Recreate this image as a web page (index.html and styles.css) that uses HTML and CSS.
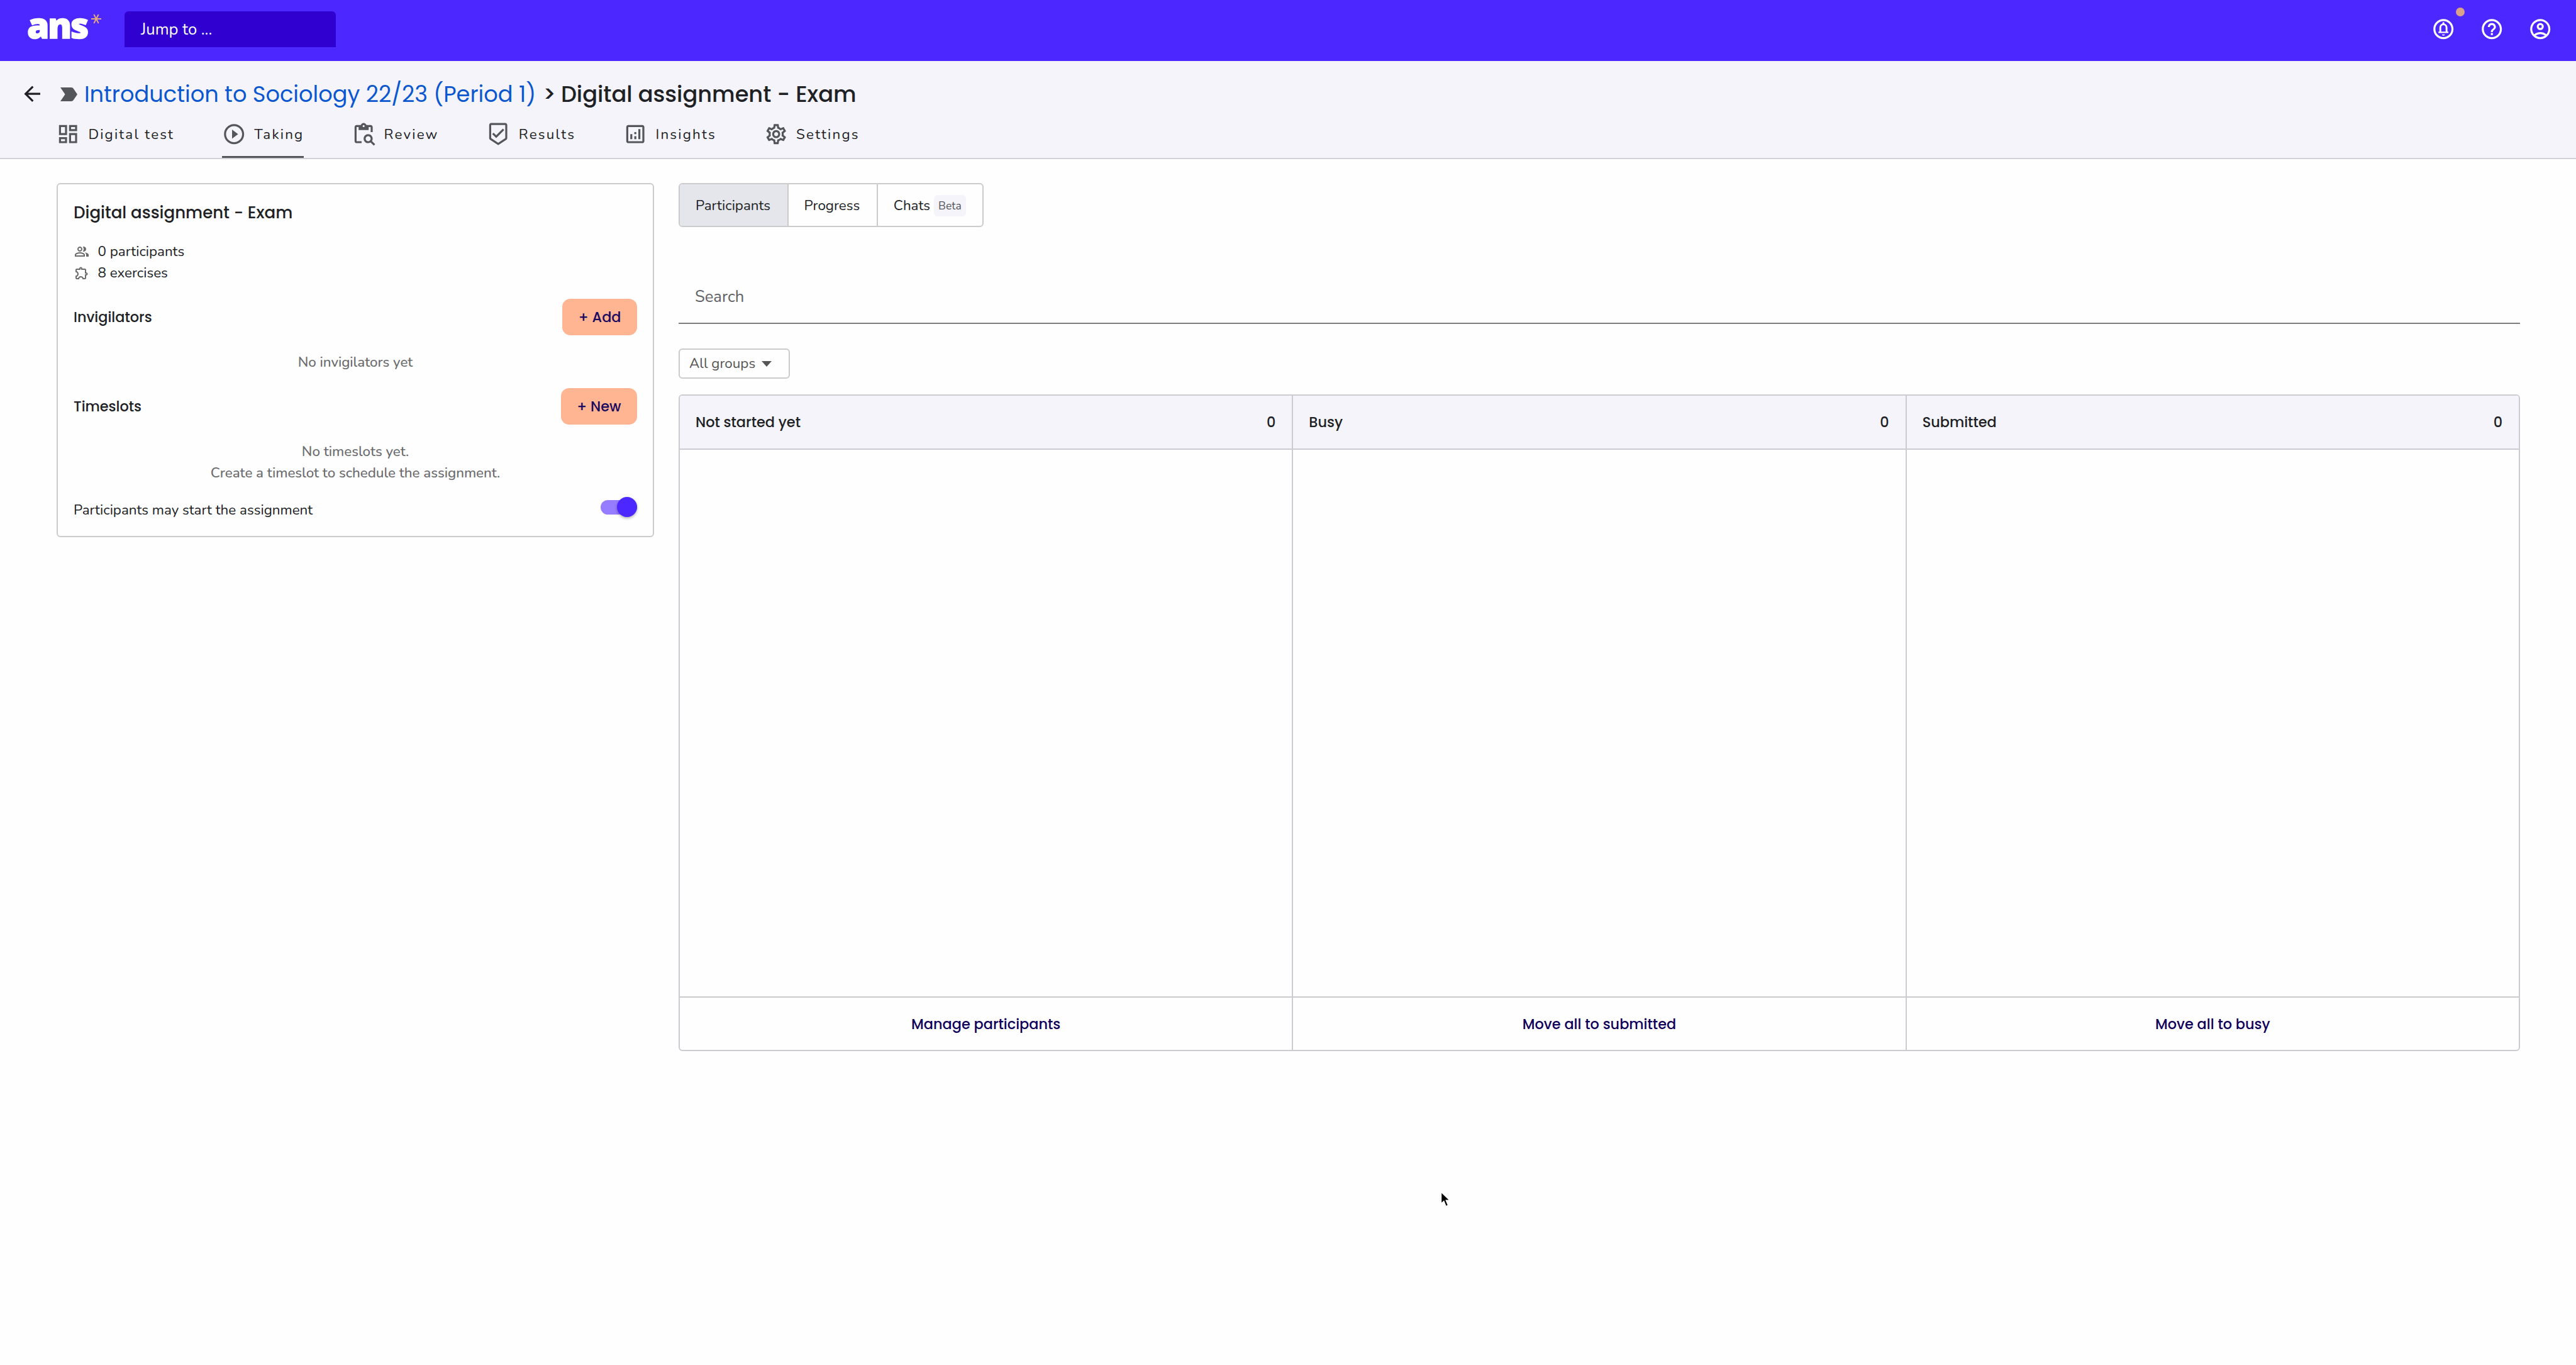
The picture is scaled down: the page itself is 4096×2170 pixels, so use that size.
FILE: index.html
```html
<!DOCTYPE html>
<html lang="en">
<head>
  <meta charset="UTF-8" />
  <meta name="viewport" content="width=device-width, initial-scale=1.0" />
  <title>Digital assignment - Exam</title>
  <link rel="stylesheet" href="styles.css">
</head>
<body>
  <header class="topbar">
    <a class="logo"><span class="logo-text">ans</span><svg class="logo-star" viewBox="0 0 16 16"><path d="M0 8h16M4.300 1l7.400 14M11.700 1l-7.400 14"/></svg></a>
    <div class="jump">Jump to ...</div>
    <nav class="top-icons">
      <span class="notify">
        <svg class="icon" viewBox="0 0 24 24"><path d="M12 2C6.480 2 2 6.480 2 12s4.480 10 10 10 10-4.480 10-10S17.520 2 12 2zm0 18c-4.410 0-8-3.590-8-8s3.590-8 8-8 8 3.590 8 8-3.590 8-8 8z"/><path d="M12 18.500c.83 0 1.500-.67 1.500-1.200h-3c0 .53.67 1.200 1.500 1.200zM16 14.500v-3.700c0-2.100-1.100-3.700-3-4.200V6.200c0-.6-.4-1-1-1s-1 .4-1 1v.4c-1.900.5-3 2.100-3 4.200v3.700H7V16h10v-1.500zm-1.800 0H9.800v-3.800c0-1.500.8-2.500 2.200-2.500s2.200 1 2.200 2.500z" fill-rule="evenodd"/></svg>
        <i class="dot"></i>
      </span>
      <svg class="icon" viewBox="0 0 24 24"><path d="M11 18h2v-2h-2v2zm1-16C6.480 2 2 6.480 2 12s4.480 10 10 10 10-4.480 10-10S17.520 2 12 2zm0 18c-4.410 0-8-3.590-8-8s3.590-8 8-8 8 3.590 8 8-3.590 8-8 8zm0-14c-2.210 0-4 1.790-4 4h2c0-1.100.9-2 2-2s2 .9 2 2c0 2-3 1.750-3 5h2c0-2.250 3-2.500 3-5 0-2.210-1.790-4-4-4z"/></svg>
      <svg class="icon" viewBox="0 0 24 24"><path fill-rule="evenodd" d="M12 2a10 10 0 1 0 0 20 10 10 0 0 0 0-20zM7.350 18.500C8.660 17.560 10.260 17 12 17s3.340.56 4.650 1.500A7.960 7.960 0 0 1 12 20a7.960 7.960 0 0 1-4.650-1.500zm10.790-1.380A9.950 9.950 0 0 0 12 15c-2.320 0-4.450.8-6.140 2.120A8 8 0 1 1 20 12c0 1.950-.7 3.730-1.860 5.120zM12 6a3.500 3.500 0 1 0 0 7 3.500 3.500 0 0 0 0-7zm0 5a1.500 1.500 0 1 1 0-3 1.500 1.500 0 0 1 0 3z"/></svg>
    </nav>
  </header>

  <div class="subheader">
    <div class="crumbs">
      <svg class="icon back" viewBox="0 0 24 24"><path d="M20 11H7.830l5.590-5.590L12 4l-8 8 8 8 1.410-1.410L7.830 13H20v-2z"/></svg>
      <svg class="course-tag" viewBox="0 0 27 22"><path d="M0 0h17.500q2 0 3.200 1.700L27 11l-6.300 9.300q-1.200 1.700-3.200 1.700H0l7.500-11z"/></svg>
      <a class="course">Introduction to Sociology 22/23 (Period 1)</a>
      <span class="sep">&gt;</span>
      <span>Digital assignment - Exam</span>
    </div>
    <nav class="tabs">
      <a class="tab"><svg class="icon" viewBox="0 0 24 24"><path d="M19 5v2h-4V5h4M9 5v6H5V5h4m10 8v6h-4v-6h4M9 17v2H5v-2h4M21 3h-8v6h8V3zM11 3H3v10h8V3zm10 8h-8v10h8V11zm-10 4H3v6h8v-6z"/></svg>Digital test</a>
      <a class="tab active"><svg class="icon" viewBox="0 0 24 24"><path d="M10 16.500l6-4.500-6-4.500v9zM12 2C6.480 2 2 6.480 2 12s4.480 10 10 10 10-4.480 10-10S17.520 2 12 2zm0 18c-4.410 0-8-3.590-8-8s3.590-8 8-8 8 3.590 8 8-3.590 8-8 8z"/></svg>Taking</a>
      <a class="tab"><svg class="icon" viewBox="0 0 24 24"><path d="M5 5h2v3h10V5h2v5h2V5c0-1.100-.9-2-2-2h-4.180C14.400 1.840 13.300 1 12 1s-2.400.84-2.820 2H5c-1.100 0-2 .9-2 2v14c0 1.100.9 2 2 2h5v-2H5V5zm7-2c.55 0 1 .45 1 1s-.45 1-1 1-1-.45-1-1 .45-1 1-1z"/><path d="M20.300 18.900c.4-.7.700-1.500.7-2.400 0-2.500-2-4.500-4.500-4.500S12 14 12 16.500s2 4.500 4.500 4.500c.9 0 1.700-.3 2.400-.7l3.200 3.200 1.400-1.400-3.200-3.200zm-3.800.1c-1.400 0-2.500-1.100-2.500-2.500s1.100-2.500 2.500-2.500 2.500 1.100 2.500 2.500-1.100 2.500-2.500 2.500z"/></svg>Review</a>
      <a class="tab"><svg class="icon" viewBox="0 0 24 24"><path d="M19 1H5c-1.100 0-1.990.9-1.990 2L3 15.930c0 .69.350 1.300.88 1.660L12 23l8.110-5.410c.53-.36.88-.97.88-1.660L21 3c0-1.100-.9-2-2-2zm-7 19.600l-7-4.660V3h14v12.930l-7 4.670zm-2.010-7.420l-2.580-2.590L6 12l4 4 8-8-1.420-1.420z"/></svg>Results</a>
      <a class="tab"><svg class="icon" viewBox="0 0 24 24"><path d="M19 3H5c-1.100 0-2 .9-2 2v14c0 1.100.9 2 2 2h14c1.100 0 2-.9 2-2V5c0-1.100-.9-2-2-2zm0 16H5V5h14v14zM7 12h2v5H7zM15 7h2v10h-2zM11 14h2v3h-2zM11 10h2v2h-2z"/></svg>Insights</a>
      <a class="tab"><svg class="icon" viewBox="0 0 24 24"><path d="M19.430 12.980c.04-.32.070-.64.070-.98 0-.34-.03-.66-.07-.98l2.110-1.650c.19-.15.240-.42.120-.64l-2-3.460c-.09-.16-.26-.25-.44-.25-.06 0-.12.010-.17.030l-2.490 1c-.52-.4-1.080-.73-1.690-.98l-.38-2.650C14.460 2.180 14.250 2 14 2h-4c-.25 0-.46.180-.49.420l-.38 2.650c-.61.250-1.170.59-1.690.98l-2.490-1c-.06-.02-.12-.03-.18-.03-.17 0-.34.090-.43.250l-2 3.460c-.13.220-.07.490.12.640l2.110 1.650c-.04.320-.07.650-.07.980 0 .33.030.66.070.98l-2.110 1.650c-.19.150-.24.420-.12.640l2 3.460c.09.160.26.250.44.250.06 0 .12-.01.170-.03l2.490-1c.52.400 1.080.73 1.690.98l.38 2.650c.03.240.24.420.49.420h4c.25 0 .46-.18.490-.42l.38-2.650c.61-.25 1.170-.59 1.690-.98l2.490 1c.06.020.12.030.18.030.17 0 .34-.09.430-.25l2-3.460c.12-.22.070-.49-.12-.64l-2.110-1.650zm-1.980-1.710c.04.310.05.520.05.730 0 .21-.02.430-.05.730l-.14 1.130.89.700 1.080.84-.7 1.210-1.270-.51-1.040-.42-.9.680c-.43.320-.84.560-1.250.73l-1.060.43-.16 1.130-.2 1.350h-1.400l-.19-1.350-.16-1.130-1.060-.43c-.43-.18-.83-.41-1.230-.71l-.91-.7-1.060.43-1.270.51-.7-1.210 1.080-.84.890-.7-.14-1.130c-.03-.31-.05-.54-.05-.74s.02-.43.050-.73l.14-1.130-.89-.7-1.080-.84.700-1.210 1.270.51 1.040.42.900-.68c.43-.32.840-.56 1.250-.73l1.060-.43.160-1.130.2-1.350h1.390l.19 1.350.16 1.130 1.060.43c.43.180.83.410 1.230.71l.91.700 1.060-.43 1.270-.51.700 1.210-1.070.85-.89.700.14 1.130zM12 8c-2.210 0-4 1.790-4 4s1.790 4 4 4 4-1.790 4-4-1.790-4-4-4zm0 6c-1.100 0-2-.9-2-2s.9-2 2-2 2 .9 2 2-.9 2-2 2z"/></svg>Settings</a>
    </nav>
  </div>

  <main class="content">
    <aside class="card">
      <h2 class="card-title">Digital assignment - Exam</h2>
      <div class="stat"><svg class="icon-sm" viewBox="0 0 24 24"><path d="M16.670 13.130C18.040 14.060 19 15.320 19 17v3h4v-3c0-2.180-3.570-3.470-6.330-3.870zM15 12c2.210 0 4-1.790 4-4s-1.790-4-4-4c-.47 0-.91.100-1.330.240C14.500 5.270 15 6.580 15 8s-.5 2.730-1.330 3.760c.42.140.86.240 1.330.240zM9 12c2.210 0 4-1.790 4-4s-1.790-4-4-4-4 1.790-4 4 1.790 4 4 4zm0-6c1.100 0 2 .9 2 2s-.9 2-2 2-2-.9-2-2 .9-2 2-2zM9 13c-2.670 0-8 1.340-8 4v3h16v-3c0-2.660-5.330-4-8-4zm6 5H3v-.99C3.200 16.290 6.300 15 9 15s5.800 1.290 6 2v1z"/></svg>0 participants</div>
      <div class="stat"><svg class="icon-sm" viewBox="0 0 24 24"><path d="M10.500 4.500c.28 0 .5.220.5.500v2h6v6h2c.28 0 .5.220.5.500s-.22.500-.5.500h-2v6h-2.120c-.68-1.750-2.390-3-4.380-3s-3.700 1.250-4.380 3H4v-2.120c1.750-.68 3-2.390 3-4.380 0-1.990-1.240-3.700-2.990-4.380L4 7h6V5c0-.28.220-.5.500-.5m0-2C9.120 2.500 8 3.620 8 5H4c-1.100 0-1.990.9-1.990 2v3.800h.29c1.490 0 2.700 1.210 2.700 2.700s-1.210 2.700-2.700 2.700H2V20c0 1.100.9 2 2 2h3.800v-.3c0-1.490 1.210-2.700 2.700-2.700s2.700 1.210 2.700 2.700v.3H17c1.100 0 2-.9 2-2v-4c1.380 0 2.500-1.120 2.500-2.500S20.380 11 19 11V7c0-1.100-.9-2-2-2h-4c0-1.380-1.120-2.500-2.500-2.500z"/></svg>8 exercises</div>

      <div class="section-head">
        <h3>Invigilators</h3>
        <button class="btn">+ Add</button>
      </div>
      <p class="empty">No invigilators yet</p>

      <div class="section-head">
        <h3>Timeslots</h3>
        <button class="btn">+ New</button>
      </div>
      <p class="empty">No timeslots yet.<br>Create a timeslot to schedule the assignment.</p>

      <div class="toggle-row">
        <span>Participants may start the assignment</span>
        <span class="toggle"></span>
      </div>
    </aside>

    <section class="board">
      <div class="segments">
        <a class="segment selected">Participants</a>
        <a class="segment">Progress</a>
        <a class="segment">Chats <span class="badge">Beta</span></a>
      </div>
      <div class="search">Search</div>
      <div class="groups"><span>All groups</span> <i class="caret"></i></div>

      <div class="columns">
        <div class="column">
          <div class="column-head"><span>Not started yet</span><span>0</span></div>
          <div class="column-body"></div>
          <a class="column-foot">Manage participants</a>
        </div>
        <div class="column">
          <div class="column-head"><span>Busy</span><span>0</span></div>
          <div class="column-body"></div>
          <a class="column-foot">Move all to submitted</a>
        </div>
        <div class="column">
          <div class="column-head"><span>Submitted</span><span>0</span></div>
          <div class="column-body"></div>
          <a class="column-foot">Move all to busy</a>
        </div>
      </div>
    </section>
  </main>

  <svg class="cursor" viewBox="0 0 18 28"><path d="M2.500 2v18.500l4.300-4 3.300 8.200 3.600-1.500-3.400-7.900h6z"/></svg>
</body>
</html>
```

FILE: styles.css
```css
* { box-sizing: border-box; }
body { margin: 0; min-height: 2170px; background: #fefefe; color: #202124; font-family: Nunito, Lato, sans-serif; font-size: 22.4px; line-height: 34px; }
h2, h3, p { margin: 0; font-weight: 500; }
svg { display: block; fill: currentColor; flex: none; }
.icon { width: 38.4px; height: 38.4px; }
.icon-sm { width: 24px; height: 24px; color: #6b6b6e; }

/* top bar */
.topbar { display: flex; align-items: flex-start; height: 97px; padding: 0 38px 0 43px; background: #4d27ff; color: #fff; }
.logo { display: flex; width: 155px; padding-top: 9px; }
.logo-text { font-family: "Open Sans", sans-serif; font-size: 57px; font-weight: 800; line-height: 60px; letter-spacing: -2.4px; -webkit-text-stroke: 1.5px #fff; }
.logo-star { width: 16px; height: 16px; margin: 13px 0 0 6px; fill: none; stroke: #e3a978; stroke-width: 2; }
.jump { width: 336px; height: 57px; margin-top: 18px; padding: 0 26px; background: #2f00cf; border-radius: 6px 6px 0 0; font-size: 25.6px; line-height: 58px; }
.top-icons { display: flex; gap: 38.4px; margin: 27px 0 0 auto; }
.notify { position: relative; }
.dot { position: absolute; top: -15px; right: -15px; width: 14px; height: 14px; border-radius: 50%; background: #d9a08a; }

/* breadcrumbs and tabs */
.subheader { height: 156px; padding: 26px 32px 0; background: #f4f4fa; border-bottom: 2px solid #d0d0d8; }
.crumbs { display: flex; align-items: center; height: 53px; font-family: Poppins, Inter, sans-serif; font-size: 35.2px; font-weight: 500; }
.crumbs .back { margin-right: 26px; }
.course-tag { width: 27px; height: 22px; margin-right: 10.5px; color: #54565c; }
.course { color: #0b57d0; font-weight: 400; }
.sep { margin: 0 8px 0 11px; }
.tabs { display: flex; gap: 75.8px; height: 75px; margin-left: 57px; }
.tab { display: flex; align-items: center; gap: 13px; letter-spacing: 2.2px; }
.tab .icon { color: #54565c; }
.tab.active { padding-top: 3px; border-bottom: 3px solid #54565c; }

.content { display: flex; gap: 39px; padding: 38px 89px 0 90px; }

/* assignment card */
.card { width: 950px; height: 563px; padding: 28px 25px 0 25px; border: 2px solid #cbcbcb; border-radius: 6px; }
.card-title { margin-bottom: 28px; font-family: Poppins, Inter, sans-serif; font-size: 26.1px; }
.stat { display: flex; align-items: center; gap: 13.5px; margin-left: 1px; }
.section-head { display: flex; align-items: center; justify-content: space-between; height: 58px; }
.section-head h3 { font-family: Poppins, Inter, sans-serif; font-size: 22.4px; }
.stat + .section-head { margin-top: 24px; }
.btn { height: 58px; padding: 0 25.5px; border: 0; border-radius: 13px; background: #ffb492; color: #1a0a60; font-family: Poppins, Inter, sans-serif; font-size: 22.4px; font-weight: 500; }
.empty { margin: 26px 0 24px; text-align: center; color: #6b6b6e; letter-spacing: -0.05px; }
.toggle-row { display: flex; align-items: center; justify-content: space-between; padding-top: 1px; }
.toggle { position: relative; width: 58px; height: 23px; margin-bottom: 9px; border-radius: 12px; background: #967dff; }
.toggle::after { content: ""; position: absolute; right: 0; top: -5px; width: 32px; height: 32px; border-radius: 50%; background: #4d27ff; box-shadow: 0 2px 4px rgba(0,0,0,0.3); }

/* participants board */
.board { flex: 1; }
.segments { display: flex; width: max-content; height: 70px; border: 2px solid #cbcbcb; border-radius: 6px; overflow: hidden; }
.segment { display: flex; align-items: center; padding: 2px 26.5px 0 25px; }
.segment + .segment { border-left: 2px solid #cbcbcb; }
.segment.selected { background: #e4e6eb; }
.badge { margin-left: 6px; padding: 0 7px; border-radius: 6px; background: #f4f4fa; color: #54565c; font-size: 17.6px; }
.search { height: 154px; padding: 0 26px; border-bottom: 2px solid #7d7d7d; color: #5f6066; font-size: 25.6px; line-height: 221px; }
.groups { display: flex; align-items: center; width: 177px; height: 48px; margin: 39px 0 25px; padding: 0 15px; border: 2px solid #cbcbcb; border-radius: 6px; color: #555; }
.caret { margin-left: 10px; border: 8px solid transparent; border-top: 9px solid #555; border-bottom: 0; }
.columns { display: flex; height: 1044px; border: 2px solid #cbcbd1; border-radius: 6px; overflow: hidden; }
.column { display: flex; flex: 1; flex-direction: column; font-family: Poppins, Inter, sans-serif; font-weight: 500; }
.column + .column { border-left: 2px solid #cbcbd1; }
.column-head { display: flex; align-items: center; justify-content: space-between; height: 86px; padding: 0 26px 0 25px; background: #f4f4fa; border-bottom: 2px solid #cbcbd1; }
.column-body { flex: 1; }
.column-foot { height: 85px; border-top: 2px solid #cbcbcb; color: #10005a; line-height: 84px; text-align: center; }

/* mouse pointer */
.cursor { position: absolute; left: 2289px; top: 1893px; width: 18px; height: 28px; fill: #000; stroke: #fff; stroke-width: 1.5; }
```
